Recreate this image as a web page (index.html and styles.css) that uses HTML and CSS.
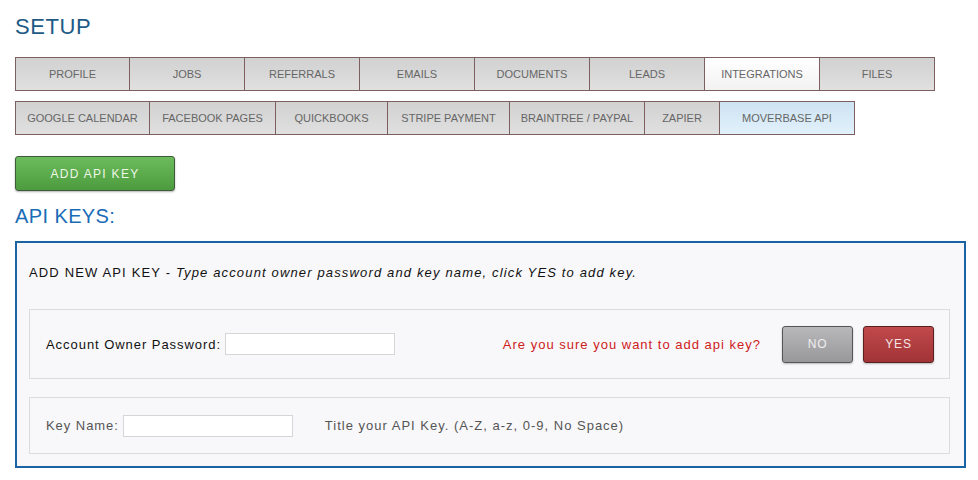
FILE: index.html
```html
<!DOCTYPE html>
<html>
<head>
<meta charset="utf-8">
<link rel="stylesheet" href="styles.css">
</head>
<body>
<div class="page">
  <h1 class="title">SETUP</h1>
  <div class="tabs tabs-main">
    <div class="tab w115">PROFILE</div>
    <div class="tab w115">JOBS</div>
    <div class="tab w115">REFERRALS</div>
    <div class="tab w115">EMAILS</div>
    <div class="tab w115">DOCUMENTS</div>
    <div class="tab w115">LEADS</div>
    <div class="tab w115 active">INTEGRATIONS</div>
    <div class="tab w115">FILES</div>
  </div>
  <div class="tabs tabs-sub">
    <div class="tab">GOOGLE CALENDAR</div>
    <div class="tab">FACEBOOK PAGES</div>
    <div class="tab">QUICKBOOKS</div>
    <div class="tab">STRIPE PAYMENT</div>
    <div class="tab">BRAINTREE / PAYPAL</div>
    <div class="tab">ZAPIER</div>
    <div class="tab selected">MOVERBASE API</div>
  </div>
  <button class="btn-add">ADD API KEY</button>
  <h2 class="subtitle">API KEYS:</h2>
  <div class="panel">
    <div class="panel-head">ADD NEW API KEY - <em>Type account owner password and key name, click YES to add key.</em></div>
    <div class="box box-pass">
      <label class="lbl">Account Owner Password:</label>
      <input class="field" type="password">
      <span class="confirm">Are you sure you want to add api key?</span>
      <button class="btn btn-no">NO</button>
      <button class="btn btn-yes">YES</button>
    </div>
    <div class="box box-name">
      <label class="lbl muted">Key Name:</label>
      <input class="field" type="text">
      <span class="hint">Title your API Key. (A-Z, a-z, 0-9, No Space)</span>
    </div>
  </div>
</div>
</body>
</html>
```

FILE: styles.css
```css
* { box-sizing: border-box; }
body {
  margin: 0;
  font-family: "Liberation Sans", Arial, sans-serif;
  background: #fff;
}
.page {
  padding: 0 12px 0 15px;
}
.title {
  margin: 0;
  padding-top: 14px;
  height: 57px;
  font-size: 22px;
  font-weight: normal;
  color: #1d5a86;
  letter-spacing: 0.6px;
  line-height: 26px;
}
.tabs {
  display: flex;
}
.tab {
  height: 34px;
  border: 1px solid #7d5f5f;
  margin-left: -1px;
  background: linear-gradient(#d1d1d1, #e0e0e0);
  color: #666;
  font-size: 11px;
  display: flex;
  align-items: center;
  justify-content: center;
  padding: 0 10px;
  white-space: nowrap;
}
.tab:first-child { margin-left: 0; }
.w115 { width: 116px; }
.tabs-main .tab:first-child { width: 115px; }
.tab.active { background: linear-gradient(#ffffff, #f2f2f2); }
.tab.selected { background: linear-gradient(#cde3f3, #e2f1fb); }
.tabs-main { margin-bottom: 10px; }
.tabs-sub .tab:nth-child(1) { width: 135px; }
.tabs-sub .tab:nth-child(2) { width: 127px; }
.tabs-sub .tab:nth-child(3) { width: 113px; }
.tabs-sub .tab:nth-child(4) { width: 123px; }
.tabs-sub .tab:nth-child(5) { width: 136px; }
.tabs-sub .tab:nth-child(6) { width: 76px; }
.tabs-sub .tab:nth-child(7) { width: 136px; }
.btn-add {
  display: block;
  margin-top: 21px;
  width: 160px;
  height: 35px;
  border: 1px solid #3d5a3b;
  border-radius: 3px;
  background: linear-gradient(#6cbb5c, #4c9c3f);
  color: #eef6e6;
  font-family: inherit;
  font-size: 12px;
  letter-spacing: 1.3px;
  box-shadow: 0 1px 2px rgba(0,0,0,0.3);
}
.subtitle {
  margin: 0;
  padding-top: 15px;
  height: 50px;
  font-size: 20px;
  font-weight: normal;
  color: #1a6cb6;
  letter-spacing: 0.4px;
  line-height: 20px;
}
.panel {
  width: 951px;
  border: 2px solid #1a64a6;
  background: #f8f8fa;
  padding: 22px 14px 12px 12px;
}
.panel-head {
  font-size: 13px;
  color: #111;
  letter-spacing: 1.15px;
  height: 44px;
}
.panel-head em { font-style: italic; }
.box {
  border: 1px solid #dcdcdf;
  display: flex;
  align-items: center;
  padding: 0 15px 0 16px;
}
.box-pass { height: 70px; margin-bottom: 18px; }
.box-name { height: 57px; }
.lbl {
  font-size: 13px;
  color: #111;
  letter-spacing: 0.95px;
  margin-right: 4px;
}
.lbl.muted { color: #555; }
.field {
  width: 170px;
  height: 22px;
  border: 1px solid #d6d6d6;
  background: #fff;
  padding: 2px 4px;
  font-size: 13px;
}
.confirm {
  margin-left: auto;
  color: #cf2020;
  font-size: 13px;
  letter-spacing: 1px;
  margin-right: 21px;
}
.btn {
  width: 71px;
  height: 37px;
  border-radius: 3px;
  font-family: inherit;
  font-size: 12px;
  letter-spacing: 0.8px;
  box-shadow: 0 1px 2px rgba(0,0,0,0.25);
}
.btn-no {
  border: 1px solid #555;
  background: linear-gradient(#b8b8bb, #98989b);
  color: #eee;
  margin-right: 10px;
}
.btn-yes {
  border: 1px solid #5a2020;
  background: linear-gradient(#c04a4c, #a13336);
  color: #f4e4e4;
}
.hint {
  margin-left: 32px;
  font-size: 13px;
  color: #555;
  letter-spacing: 1px;
}
```
